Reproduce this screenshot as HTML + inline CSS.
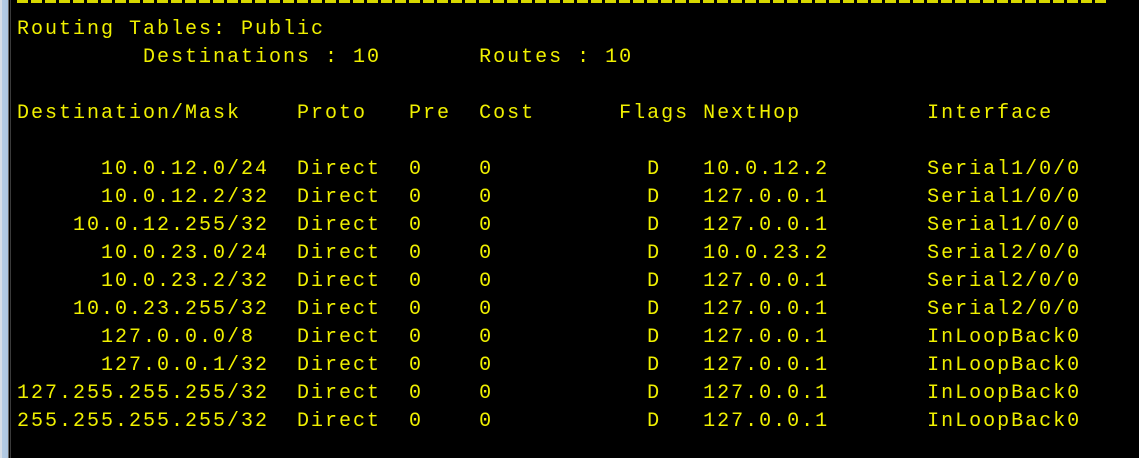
<!DOCTYPE html>
<html><head><style>
html,body{margin:0;padding:0;background:#000;width:1139px;height:458px;overflow:hidden;}
.b{position:absolute;top:0;left:0;width:8px;height:458px;background:linear-gradient(90deg,#d6dde6 0,#d6dde6 2px,#b4cbe3 2px,#aec6e0 8px);}
.l1{position:absolute;top:0;left:8px;width:1px;height:458px;background:#6a6a6a;}
.l2{position:absolute;top:0;left:10px;width:1px;height:458px;background:#3a3a3a;}
pre{position:absolute;left:17px;top:16px;margin:0;font-family:"Liberation Mono",monospace;font-size:20px;letter-spacing:2px;line-height:28px;color:#f0f000;}
.d{position:absolute;left:17px;top:0;width:1090px;height:3px;background:repeating-linear-gradient(90deg,#d8d800 0,#d8d800 11px,#000 11px,#000 14px);}
</style></head><body>
<div class="b"></div><div class="l1"></div><div class="l2"></div>
<div class="d"></div>
<pre>Routing Tables: Public
         Destinations : 10       Routes : 10

Destination/Mask    Proto   Pre  Cost      Flags NextHop         Interface

      10.0.12.0/24  Direct  0    0           D   10.0.12.2       Serial1/0/0
      10.0.12.2/32  Direct  0    0           D   127.0.0.1       Serial1/0/0
    10.0.12.255/32  Direct  0    0           D   127.0.0.1       Serial1/0/0
      10.0.23.0/24  Direct  0    0           D   10.0.23.2       Serial2/0/0
      10.0.23.2/32  Direct  0    0           D   127.0.0.1       Serial2/0/0
    10.0.23.255/32  Direct  0    0           D   127.0.0.1       Serial2/0/0
      127.0.0.0/8   Direct  0    0           D   127.0.0.1       InLoopBack0
      127.0.0.1/32  Direct  0    0           D   127.0.0.1       InLoopBack0
127.255.255.255/32  Direct  0    0           D   127.0.0.1       InLoopBack0
255.255.255.255/32  Direct  0    0           D   127.0.0.1       InLoopBack0
</pre>
</body></html>
